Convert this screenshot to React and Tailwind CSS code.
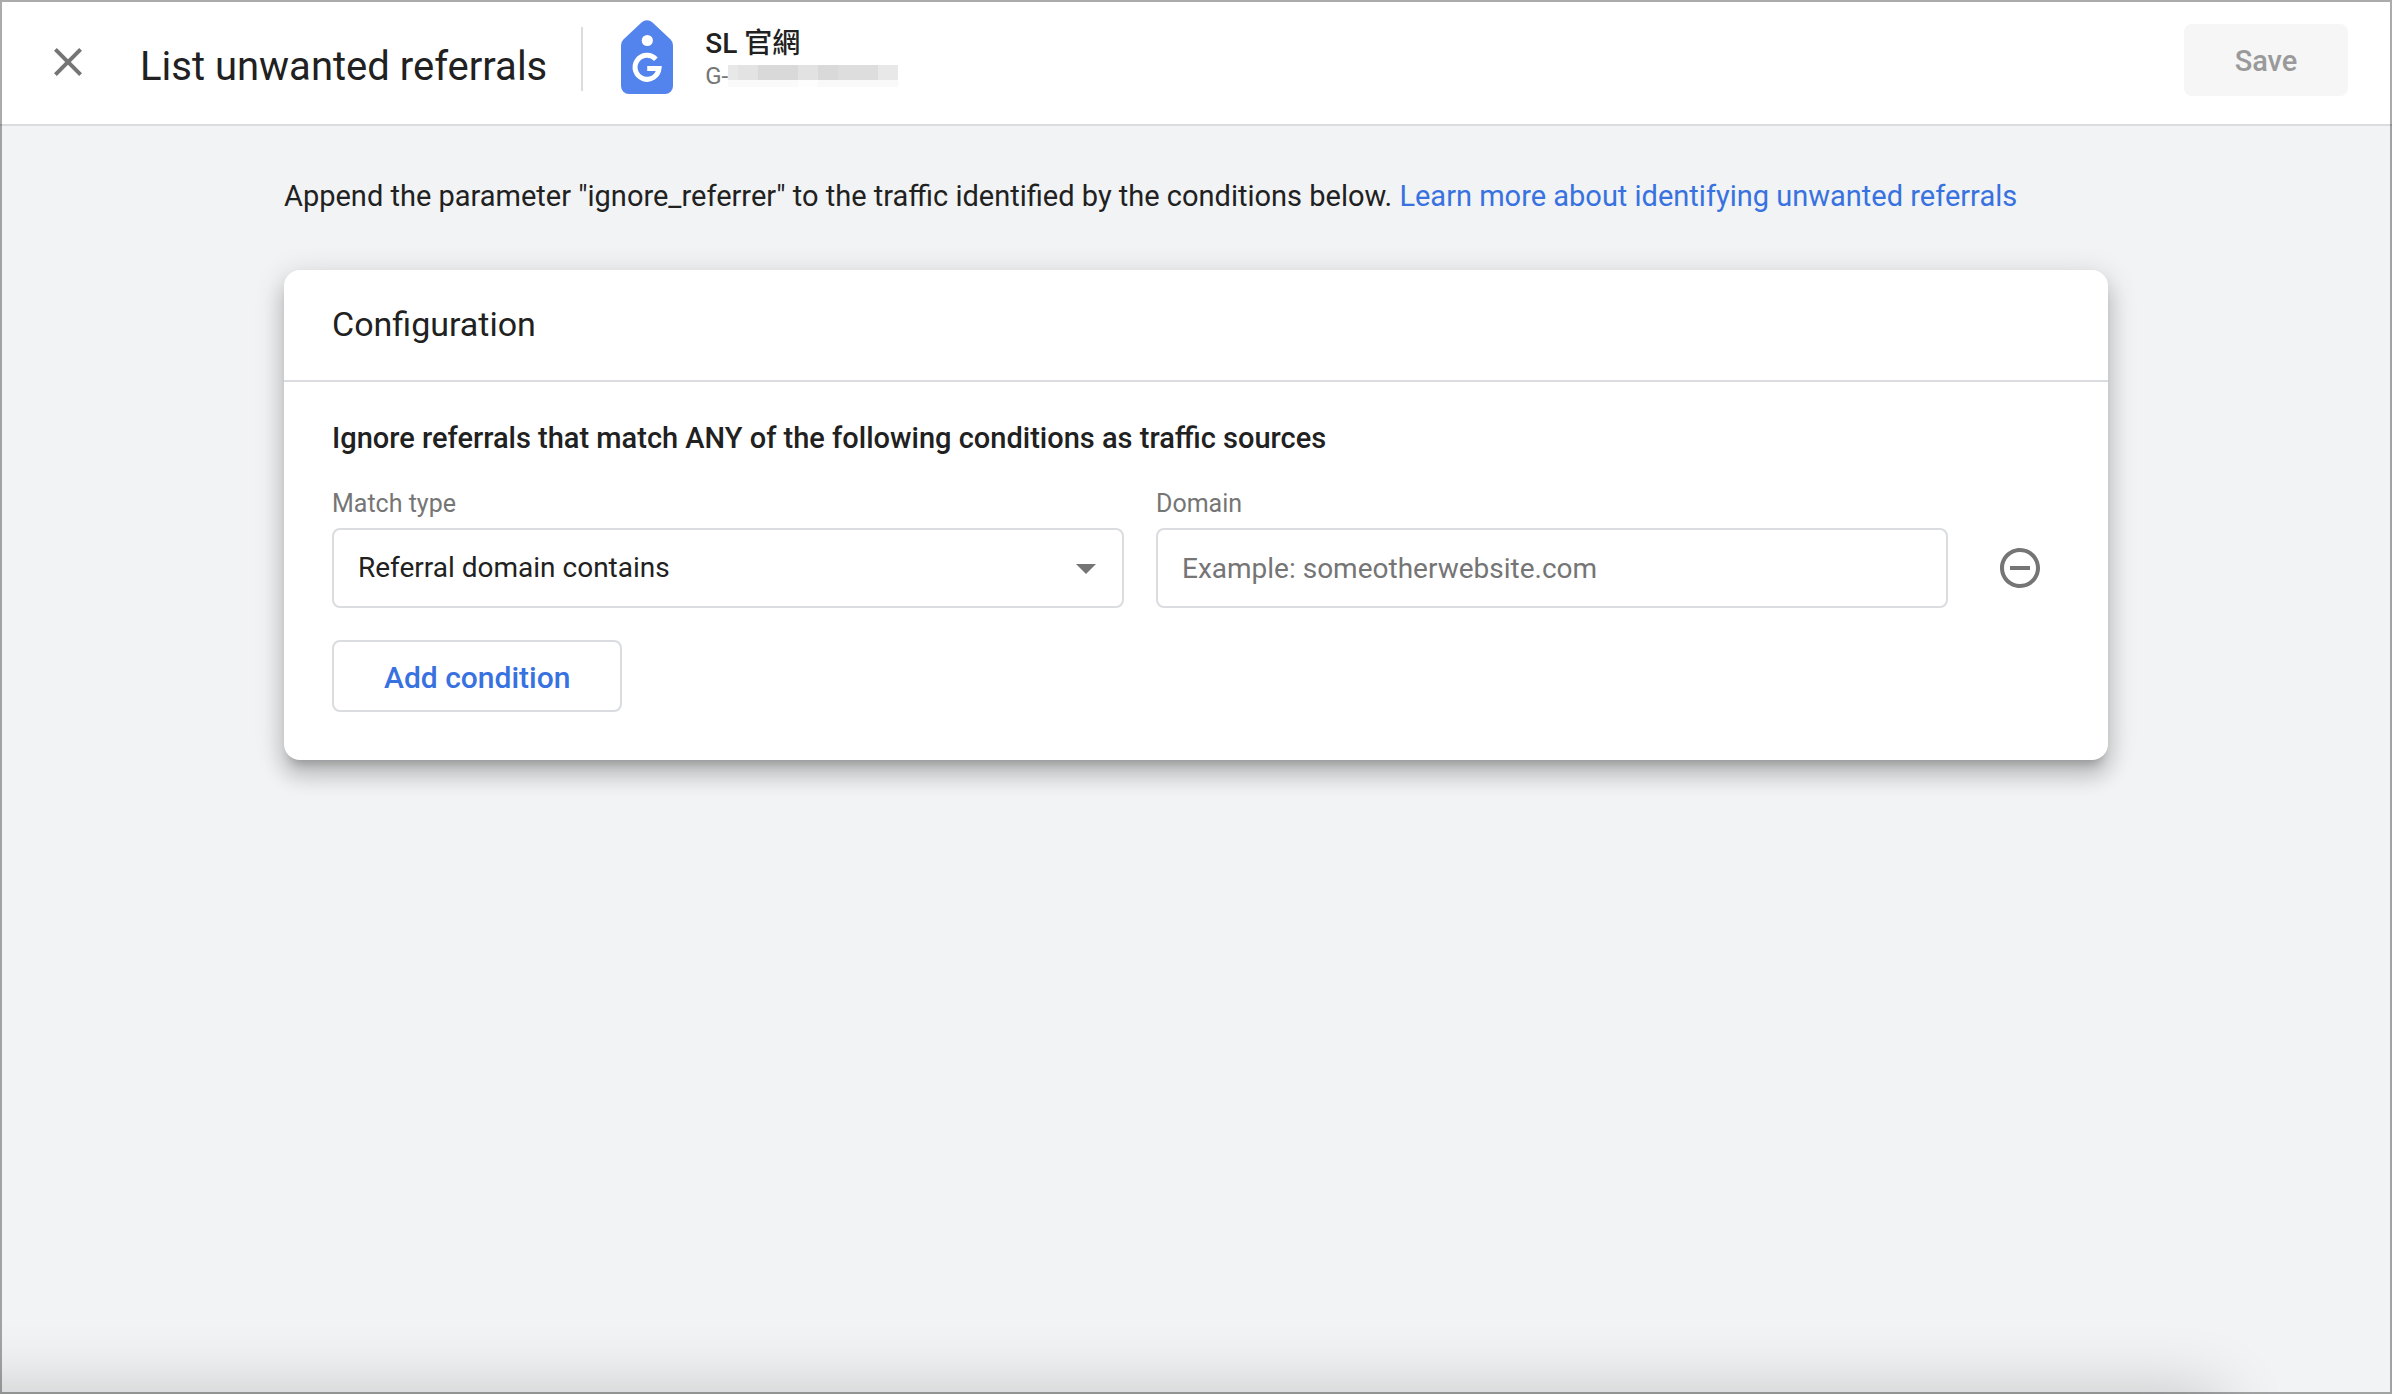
import React, { useState } from 'react';

const CloseIcon = () => (
  <svg viewBox="0 0 24 24" className="h-12 w-12" fill="currentColor" aria-hidden="true">
    <path d="M19 6.41 17.59 5 12 10.59 6.41 5 5 6.41 10.59 12 5 17.59 6.41 19 12 13.41 17.59 19 19 17.59 13.41 12z" />
  </svg>
);

const MinusCircleIcon = () => (
  <svg viewBox="0 0 24 24" className="h-12 w-12" fill="currentColor" aria-hidden="true">
    <path d="M7 11v2h10v-2H7zm5-9C6.48 2 2 6.48 2 12s4.48 10 10 10 10-4.48 10-10S17.52 2 12 2zm0 18c-4.41 0-8-3.59-8-8s3.59-8 8-8 8 3.59 8 8-3.59 8-8 8z" />
  </svg>
);

const TagLogo = () => (
  <svg viewBox="0 0 52 74" className="mb-2.5 h-[74px] w-[52px] shrink-0" aria-hidden="true">
    <path
      fill="#5383ec"
      d="M20.5 2.4a8 8 0 0 1 11 0L49.6 19.6A8 8 0 0 1 52 25.3V66a8 8 0 0 1-8 8H8a8 8 0 0 1-8-8V25.3a8 8 0 0 1 2.4-5.7z"
    />
    <circle cx="26.3" cy="20.5" r="5.6" fill="#fff" />
    <path
      fill="none"
      stroke="#fff"
      strokeWidth="5"
      d="M34.9 39.2A12 12 0 1 0 38 48.6H26.2"
    />
  </svg>
);

// The measurement ID is redacted, drawn as a strip of grey cells
const RedactedId = () => (
  <span className="flex h-[22px] w-[170px] flex-col" aria-hidden="true">
    <span className="flex h-[15px]">
      <span className="w-2.5 bg-[#e8e8e8]" />
      <span className="w-5 bg-[#e3e3e3]" />
      <span className="w-10 bg-[#d9d9d9]" />
      <span className="w-5 bg-[#e2e2e2]" />
      <span className="w-5 bg-[#d9d9d9]" />
      <span className="w-10 bg-[#dddddd]" />
      <span className="w-5 bg-[#e8e8e8]" />
    </span>
    <span className="flex h-[7px]">
      <span className="w-[70px] bg-[#fafafa]" />
      <span className="w-5 bg-[#fdfdfd]" />
      <span className="w-20 bg-[#f9f9f9]" />
    </span>
  </span>
);

const Header = () => (
  <header className="flex h-[126px] items-center border-b-2 border-[#dadce0] bg-white pr-11 pl-11">
    <button type="button" aria-label="Close" className="text-[#757575]">
      <CloseIcon />
    </button>
    <h1 className="ml-12 pt-2.5 text-[40px] leading-12 whitespace-nowrap">List unwanted referrals</h1>
    <div className="mr-[38px] mb-1.5 ml-[34px] h-16 w-0.5 bg-[#dadce0]" />
    <TagLogo />
    <div className="mb-1 ml-8">
      <div className="text-[28px] leading-8 font-medium">SL 官網</div>
      <div className="flex items-center text-2xl leading-8 text-[#757575]">
        <span>G-</span>
        <RedactedId />
      </div>
    </div>
    <button
      type="button"
      disabled
      className="mb-1 ml-auto h-[72px] w-[164px] rounded-lg bg-[#f6f6f6] pt-1 text-[29px] font-medium text-[#9a9a9a]"
    >
      Save
    </button>
  </header>
);

const ConditionRow = () => {
  const [domain, setDomain] = useState('');

  return (
    <div className="flex items-end gap-8">
      <div className="flex-1">
        <label htmlFor="match-type" className="block text-[25px] leading-12 text-[#757575]">
          Match type
        </label>
        <div className="relative">
          <select
            id="match-type"
            className="block h-20 w-full appearance-none rounded-lg border-2 border-[#dadce0] bg-white px-6 text-[28px]"
          >
            <option>Referral domain contains</option>
          </select>
          <svg
            viewBox="0 0 20 10"
            className="pointer-events-none absolute top-9 right-7 h-2.5 w-5 fill-[#757575]"
            aria-hidden="true"
          >
            <path d="M0 0h20L10 10z" />
          </svg>
        </div>
      </div>
      <div className="flex-1">
        <label htmlFor="domain" className="block text-[25px] leading-12 text-[#757575]">
          Domain
        </label>
        <input
          id="domain"
          type="text"
          value={domain}
          onChange={(e) => setDomain(e.target.value)}
          placeholder="Example: someotherwebsite.com"
          className="block h-20 w-full rounded-lg border-2 border-[#dadce0] bg-white px-6 text-[28px] placeholder:text-[#757575]"
        />
      </div>
      <button
        type="button"
        aria-label="Remove condition"
        className="flex h-20 w-20 items-center justify-center text-[#757575]"
      >
        <MinusCircleIcon />
      </button>
    </div>
  );
};

export default function App() {
  return (
    <div className="relative min-h-screen overflow-hidden bg-[#f1f3f4] font-['Roboto','Noto_Sans_CJK_TC',sans-serif] text-[#212121]">
      <Header />
      <main className="mx-auto w-full max-w-[1824px] pt-[46px]">
        <p className="text-[29px] leading-12">
          Append the parameter "ignore_referrer" to the traffic identified by the conditions below.{' '}
          <a href="#learn-more" className="text-[#3871e0]">
            Learn more about identifying unwanted referrals
          </a>
        </p>
        <section className="mt-[50px] rounded-2xl bg-white shadow-[0_10px_10px_-6px_rgba(0,0,0,0.2),0_16px_20px_2px_rgba(0,0,0,0.14),0_6px_28px_4px_rgba(0,0,0,0.12)]">
          <h2 className="border-b-2 border-[#dadce0] px-12 pt-[30px] pb-8 text-[34px] leading-12">Configuration</h2>
          <div className="px-12 pt-8 pb-12">
            <h3 className="mb-[18px] text-[29px] leading-12 font-medium">
              Ignore referrals that match ANY of the following conditions as traffic sources
            </h3>
            <ConditionRow />
            <button
              type="button"
              className="mt-8 block h-[72px] rounded-lg border-2 border-[#dadce0] px-[50px] pt-0.5 text-[30px] font-medium text-[#3871e0]"
            >
              Add condition
            </button>
          </div>
        </section>
      </main>
      {/* shadow of the panel parked below the fold */}
      <div className="absolute top-full right-[172px] -left-40 h-20 shadow-[0_0_70px_rgba(0,0,0,0.2)]" />
      <div className="pointer-events-none absolute inset-0 border-2 border-black/33" />
    </div>
  );
}
